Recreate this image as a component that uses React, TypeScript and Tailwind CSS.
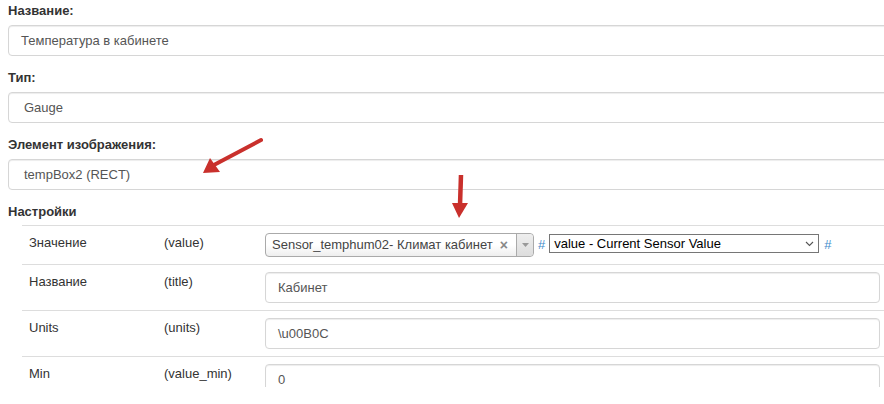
import React from "react";

const font = { fontFamily: '"Liberation Sans", Arial, sans-serif' };

function FieldGroup({ label, value, select }: { label: string; value: string; select?: boolean }) {
  return (
    <div className="mb-[12px]">
      <div className="h-5 leading-5 text-[13px] font-bold text-[#333] mb-[4px]">{label}</div>
      <div
        className={`h-[31px] w-[900px] border border-[#d6d6d6] rounded-[4px] bg-white flex items-center text-[13px] text-[#555] shadow-[inset_0_1px_1px_rgba(0,0,0,0.075)] ${
          select ? "pl-[15px]" : "pl-[12px]"
        }`}
      >
        {value}
      </div>
    </div>
  );
}

function TextInput({ value }: { value: string }) {
  return (
    <div className="h-[31px] w-[615px] border border-[#d6d6d6] rounded-[4px] bg-white flex items-center pl-[12px] text-[13px] text-[#555] shadow-[inset_0_1px_1px_rgba(0,0,0,0.075)]">
      {value}
    </div>
  );
}

function Row({ name, code, children }: { name: string; code: string; children: React.ReactNode }) {
  return (
    <div className="flex border-t border-[#dddddd]">
      <div className="w-[135px] shrink-0 p-[7px] leading-5 text-[13px] text-[#333]">{name}</div>
      <div className="w-[101px] shrink-0 p-[7px] leading-5 text-[13px] text-[#333]">{code}</div>
      <div className="flex-1 p-[7px]">{children}</div>
    </div>
  );
}

export default function App() {
  return (
    <div className="relative w-[884px] h-[404px] overflow-hidden bg-white" style={font}>
      <div className="h-[387px] overflow-hidden pl-[8px] pt-[1px]">
        <FieldGroup label="Название:" value="Температура в кабинете" />
        <FieldGroup label="Тип:" value="Gauge" select />
        <FieldGroup label="Элемент изображения:" value="tempBox2 (RECT)" select />
        <div className="h-5 leading-5 text-[13px] font-bold text-[#333] mb-[3px]">Настройки</div>
        <div className="ml-[14px] w-[865px]">
          <Row name="Значение" code="(value)">
            <div className="flex items-start">
              <div className="h-[24px] w-[269px] rounded-[4px] border border-[#aaaaaa] bg-gradient-to-b from-white from-50% to-[#eeeeee] flex items-center text-[13px] text-[#444]">
                <span className="pl-[6px] flex-1 whitespace-nowrap">Sensor_temphum02- Климат кабинет</span>
                <span className="text-[14px] font-bold text-[#888] mr-[8px] leading-none">×</span>
                <span className="h-full w-[17px] border-l border-[#aaaaaa] rounded-r-[4px] bg-gradient-to-b from-[#eeeeee] to-[#dddddd] flex items-center justify-center">
                  <svg width="7" height="4" viewBox="0 0 7 4">
                    <path d="M0 0 L7 0 L3.5 4 Z" fill="#999" />
                  </svg>
                </span>
              </div>
              <span className="ml-[4px] leading-[24px] text-[13px] text-[#428bca]">#</span>
              <div className="ml-[4px] mt-[1px] h-[19px] w-[270px] border border-[#767676] bg-white flex items-center text-[13px] text-black">
                <span className="pl-[4px] flex-1 whitespace-nowrap">value - Current Sensor Value</span>
                <svg width="9" height="6" viewBox="0 0 9 6" className="mr-[4px]">
                  <path d="M1 1 L4.5 4.5 L8 1" fill="none" stroke="#555" strokeWidth="1.1" />
                </svg>
              </div>
              <span className="ml-[5px] leading-[24px] text-[13px] text-[#428bca]">#</span>
            </div>
          </Row>
          <Row name="Название" code="(title)">
            <TextInput value="Кабинет" />
          </Row>
          <Row name="Units" code="(units)">
            <TextInput value="\u00B0C" />
          </Row>
          <Row name="Min" code="(value_min)">
            <TextInput value="0" />
          </Row>
        </div>
      </div>
      <svg className="absolute left-0 top-0 pointer-events-none" width="884" height="404">
        <line x1="261" y1="140" x2="212" y2="166" stroke="#c9302c" strokeWidth="4" strokeLinecap="round" />
        <polygon points="203,173 210,158 220,172" fill="#c9302c" />
        <line x1="461" y1="175" x2="460" y2="205" stroke="#c9302c" strokeWidth="4.5" />
        <polygon points="452,203 468,203 459,218" fill="#c9302c" />
      </svg>
    </div>
  );
}
